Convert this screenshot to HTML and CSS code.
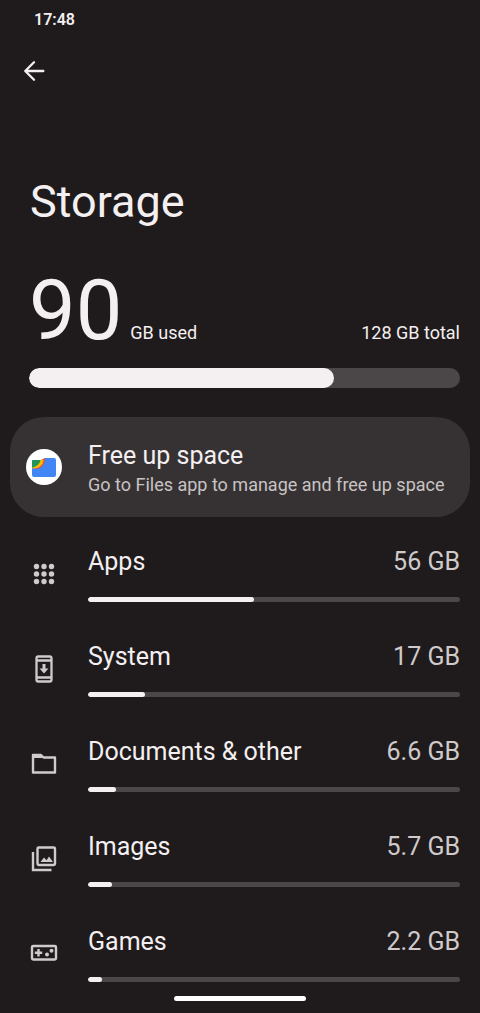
FILE: index.html
```html
<!DOCTYPE html>
<html lang="en">
<head>
    <meta charset="UTF-8">
    <meta name="viewport" content="width=device-width, initial-scale=1.0">
    <title>Storage</title>
    <link rel="stylesheet" href="styles.css">
</head>
<body>
    <div class="status-bar">17:48</div>

    <header class="header">
        <button type="button" class="back-btn" aria-label="Back">
            <svg width="28" height="28" viewBox="0 0 24 24" fill="none" stroke="currentColor" stroke-width="2" stroke-linecap="round" stroke-linejoin="round">
                <path d="M20 12H5M12 4.500L4.500 12l7.500 7.500"/>
            </svg>
        </button>
        <h1>Storage</h1>
    </header>

    <main>
        <section class="summary">
            <div class="summary-text">
                <span class="used">90</span>
                <span class="unit">GB used</span>
                <span class="total">128 GB total</span>
            </div>
            <div class="bar bar-large">
                <div class="fill" style="width: 70.8%"></div>
            </div>
        </section>

        <a href="#" class="free-card">
            <svg class="files-logo" width="36" height="36" viewBox="0 0 36 36">
                <circle cx="18" cy="18" r="18" fill="#fff"/>
                <path d="M6 11h11l2-2h9q2 0 2 2v15q0 2-2 2H8q-2 0-2-2z" fill="#4285f4"/>
                <path d="M9 20c6 0 10-4 10-11l-4 2z" fill="#e8502f"/>
                <path d="M6 19.500c7 0 11-3 11.500-8.500H8z" fill="#fbbc04"/>
                <path d="M6 18.500c5-1 8-4 8.500-7.500H8q-2 0-2 2z" fill="#219653"/>
            </svg>
            <span class="card-text">
                <span class="card-title">Free up space</span>
                <span class="card-sub">Go to Files app to manage and free up space</span>
            </span>
        </a>

        <ul class="list">
            <li class="item">
                <svg class="icon" viewBox="0 0 28 28" fill="currentColor">
                    <circle cx="6.500" cy="6.500" r="2.700"/><circle cx="14" cy="6.500" r="2.700"/><circle cx="21.500" cy="6.500" r="2.700"/>
                    <circle cx="6.500" cy="14" r="2.700"/><circle cx="14" cy="14" r="2.700"/><circle cx="21.500" cy="14" r="2.700"/>
                    <circle cx="6.500" cy="21.500" r="2.700"/><circle cx="14" cy="21.500" r="2.700"/><circle cx="21.500" cy="21.500" r="2.700"/>
                </svg>
                <div class="info">
                    <div class="row"><span class="name">Apps</span><span class="size">56 GB</span></div>
                    <div class="bar"><div class="fill" style="width: 44.6%"></div></div>
                </div>
            </li>
            <li class="item">
                <svg class="icon" viewBox="0 0 28 28" fill="none" stroke="currentColor" stroke-width="2.300">
                    <rect x="6.500" y="1.500" width="15" height="25" rx="1.800"/>
                    <path d="M6.500 5.500h15M6.500 22.500h15"/>
                    <path d="M14 9v5" stroke-width="3"/>
                    <path d="M9.500 13.500h9L14 18.500z" fill="currentColor" stroke="none"/>
                </svg>
                <div class="info">
                    <div class="row"><span class="name">System</span><span class="size">17 GB</span></div>
                    <div class="bar"><div class="fill" style="width: 15.4%"></div></div>
                </div>
            </li>
            <li class="item">
                <svg class="icon" viewBox="0 0 28 28" fill="none" stroke="currentColor" stroke-width="2.400" stroke-linejoin="round">
                    <path d="M3 22.500V5h8l2.500 2.500H25v15z"/>
                    <path d="M3 6.500h9" stroke-width="3"/>
                </svg>
                <div class="info">
                    <div class="row"><span class="name">Documents &amp; other</span><span class="size">6.6 GB</span></div>
                    <div class="bar"><div class="fill" style="width: 7.5%"></div></div>
                </div>
            </li>
            <li class="item">
                <svg class="icon" viewBox="0 0 28 28" fill="none" stroke="currentColor" stroke-width="2.400">
                    <rect x="7.500" y="2.500" width="17.500" height="17.500" rx="1.200"/>
                    <path d="M3 7v18h18.500"/>
                    <path d="M10.500 17l3.500-4.500 2.500 2.700 2.500-3.700 4 5.500z" fill="currentColor" stroke="none"/>
                </svg>
                <div class="info">
                    <div class="row"><span class="name">Images</span><span class="size">5.7 GB</span></div>
                    <div class="bar"><div class="fill" style="width: 6.5%"></div></div>
                </div>
            </li>
            <li class="item">
                <svg class="icon" viewBox="0 0 28 28" fill="none" stroke="currentColor" stroke-width="2.400">
                    <rect x="2" y="6" width="24" height="13.500" rx="1.200"/>
                    <path d="M4.800 12.700h7.400M8.500 9v7.400"/>
                    <g fill="currentColor" stroke="none"><circle cx="17" cy="14.500" r="2"/><circle cx="21.500" cy="10.800" r="2"/></g>
                </svg>
                <div class="info">
                    <div class="row"><span class="name">Games</span><span class="size">2.2 GB</span></div>
                    <div class="bar"><div class="fill" style="width: 3.7%"></div></div>
                </div>
            </li>
        </ul>
    </main>

    <div class="home-indicator"></div>
</body>
</html>
```
FILE: styles.css
```css
* {
    box-sizing: border-box;
}

body {
    font-family: Roboto, "Noto Sans", sans-serif;
    background-color: #1f1b1c;
    color: #f4eff0;
    margin: 0;
}

.status-bar {
    padding: 10px 34px 8px;
    font-size: 16px;
    line-height: 20px;
    font-weight: 600;
}

.header {
    padding: 9px 20px 0;
}

.back-btn {
    display: block;
    padding: 10px 0;
    border: none;
    background: none;
    color: inherit;
    cursor: pointer;
}

.back-btn svg {
    display: block;
}

h1 {
    margin: 77px 10px 0;
    font-size: 45px;
    line-height: 60px;
    font-weight: 400;
}

.summary {
    padding: 39px 20px 29px 29px;
}

.summary-text {
    display: flex;
    align-items: baseline;
    gap: 8px;
    margin-bottom: 17px;
}

.used {
    font-size: 83px;
    line-height: 80px;
}

.unit, .total {
    font-size: 18px;
    line-height: 24px;
}

.total {
    margin-left: auto;
}

.bar {
    height: 5px;
    border-radius: 10px;
    background: #4b4748;
    overflow: hidden;
}

.bar-large {
    height: 20px;
}

.fill {
    height: 100%;
    border-radius: 10px;
    background: #f4eff0;
}

.free-card {
    display: flex;
    align-items: center;
    min-height: 100px;
    margin: 0 10px 9px;
    padding: 16px;
    gap: 26px;
    border-radius: 34px;
    background: #363233;
    color: inherit;
    text-decoration: none;
}

.files-logo {
    flex: none;
}

.card-text {
    padding-top: 4px;
}

.card-title, .card-sub {
    display: block;
}

.card-title, .name, .size {
    font-size: 25px;
    line-height: 32px;
}

.card-sub {
    font-size: 18px;
    line-height: 26px;
    color: #c8c3c4;
}

.list {
    list-style: none;
    margin: 0;
    padding: 0;
}

.item {
    display: flex;
    align-items: center;
    gap: 30px;
    padding: 20px 20px 19px 30px;
}

.icon {
    flex: none;
    width: 28px;
    height: 28px;
    color: #cfcacb;
}

.info {
    flex: 1;
}

.row {
    display: flex;
    justify-content: space-between;
    margin-bottom: 19px;
}

.size {
    color: #cfcacb;
}

.home-indicator {
    position: fixed;
    bottom: 12px;
    left: 50%;
    width: 132px;
    height: 5px;
    margin-left: -66px;
    border-radius: 3px;
    background: #fff;
}
```
